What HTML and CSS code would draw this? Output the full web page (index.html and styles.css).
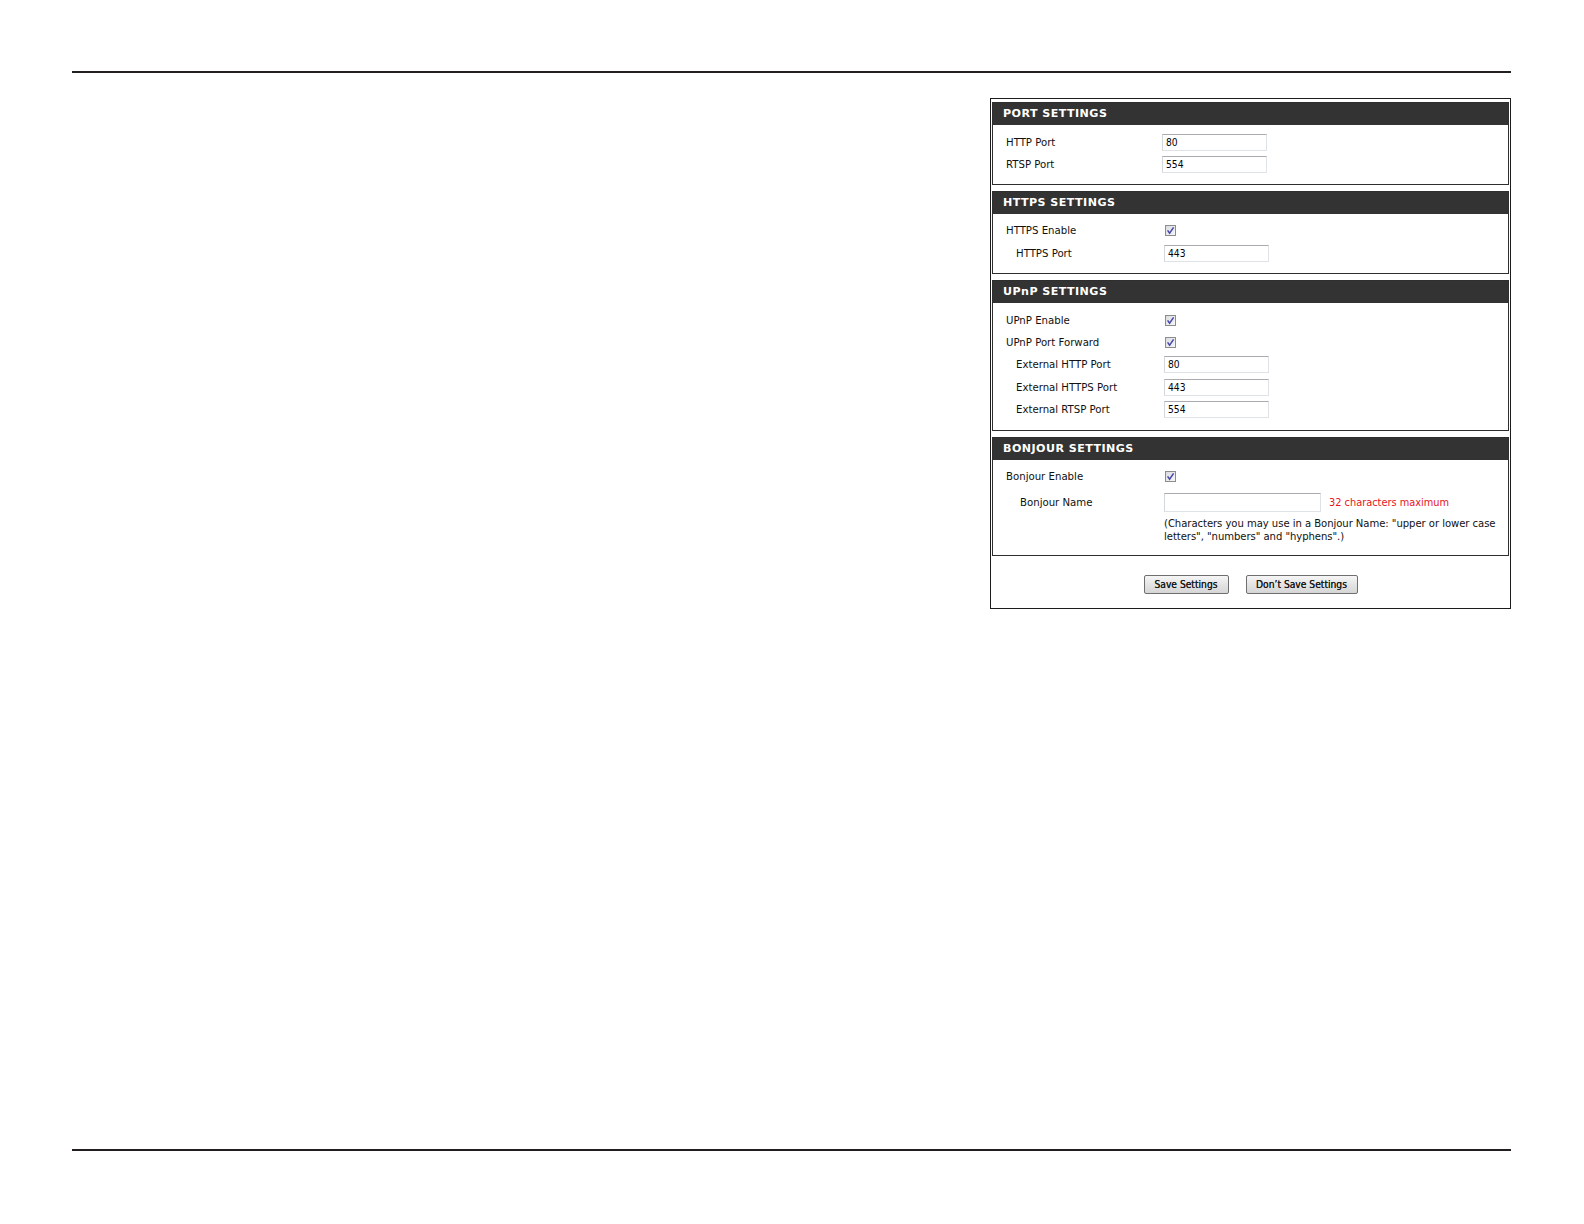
FILE: index.html
```html
<!DOCTYPE html>
<html>
<head>
<meta charset="utf-8">
<link rel="stylesheet" href="styles.css">
</head>
<body>
<div class="page">
  <div class="rule"></div>
  <div class="content">
    <div class="panel">
      <div class="section">
        <div class="section-head">PORT SETTINGS</div>
        <div class="section-body port">
          <div class="row"><span class="label w156">HTTP Port</span><span class="field">80</span></div>
          <div class="row"><span class="label w156">RTSP Port</span><span class="field">554</span></div>
        </div>
      </div>
      <div class="section">
        <div class="section-head">HTTPS SETTINGS</div>
        <div class="section-body https">
          <div class="row"><span class="label w159">HTTPS Enable</span><span class="check"><svg width="9" height="9" viewBox="0 0 9 9"><path d="M1.6 4.4 L3.6 7.2 L7.6 1.4" fill="none" stroke="#4646a8" stroke-width="1.5"/></svg></span></div>
          <div class="row tall24 indent"><span class="label w148">HTTPS Port</span><span class="field">443</span></div>
        </div>
      </div>
      <div class="section">
        <div class="section-head">UPnP SETTINGS</div>
        <div class="section-body upnp">
          <div class="row"><span class="label w159">UPnP Enable</span><span class="check"><svg width="9" height="9" viewBox="0 0 9 9"><path d="M1.6 4.4 L3.6 7.2 L7.6 1.4" fill="none" stroke="#4646a8" stroke-width="1.5"/></svg></span></div>
          <div class="row"><span class="label w159">UPnP Port Forward</span><span class="check"><svg width="9" height="9" viewBox="0 0 9 9"><path d="M1.6 4.4 L3.6 7.2 L7.6 1.4" fill="none" stroke="#4646a8" stroke-width="1.5"/></svg></span></div>
          <div class="row tall23 indent"><span class="label w148">External HTTP Port</span><span class="field">80</span></div>
          <div class="row indent"><span class="label w148">External HTTPS Port</span><span class="field">443</span></div>
          <div class="row tall23 indent"><span class="label w148">External RTSP Port</span><span class="field">554</span></div>
        </div>
      </div>
      <div class="section">
        <div class="section-head">BONJOUR SETTINGS</div>
        <div class="section-body bonjour">
          <div class="row"><span class="label w159">Bonjour Enable</span><span class="check"><svg width="9" height="9" viewBox="0 0 9 9"><path d="M1.6 4.4 L3.6 7.2 L7.6 1.4" fill="none" stroke="#4646a8" stroke-width="1.5"/></svg></span></div>
          <div class="row name-row indent2"><span class="label w144">Bonjour Name</span><span class="field name"></span><span class="hint">32 characters maximum</span></div>
          <div class="note">(Characters you may use in a Bonjour Name: "upper or lower case letters", "numbers" and "hyphens".)</div>
        </div>
      </div>
      <div class="buttons">
        <span class="btn save">Save Settings</span>
        <span class="btn dont">Don’t Save Settings</span>
      </div>
    </div>
  </div>
  <div class="rule bottom"></div>
</div>
</body>
</html>
```
FILE: styles.css
```css
html, body {
  margin: 0;
  padding: 0;
  background: #fff;
}
.page {
  height: 1224px;
  display: flex;
  flex-direction: column;
  font-family: "DejaVu Sans Condensed", "Liberation Sans", sans-serif;
  color: #111;
}
.rule {
  margin: 71px 0 0 72px;
  width: 1439px;
  height: 2px;
  background: #231f20;
}
.rule.bottom {
  margin-top: auto;
  margin-bottom: 73px;
}
.content {
  display: flex;
  justify-content: flex-end;
  padding-right: 73px;
  margin-top: 25px;
}
.panel {
  width: 517px;
  border: 1px solid #1c1c1c;
  padding: 3px 1px 0;
}
.section {
  border: 1px solid #2e2e2e;
  margin-bottom: 6px;
}
.section-head {
  background: #333333;
  color: #fff;
  height: 22px;
  line-height: 22px;
  padding-left: 10px;
  font-family: "DejaVu Sans", Verdana, sans-serif;
  font-weight: bold;
  font-size: 11.1px;
  letter-spacing: 0.45px;
}
.section-body {
  padding: 6px 0 9px;
}
.section-body.https {
  padding-top: 5px;
  padding-bottom: 8px;
}
.section-body.bonjour {
  padding-top: 5px;
  padding-bottom: 12px;
}
.row {
  display: flex;
  align-items: center;
  height: 22px;
  padding-left: 13px;
  font-size: 11.3px;
}
.row.tall23 {
  height: 23px;
}
.row.tall24 {
  height: 24px;
}
.row.indent {
  padding-left: 23px;
}
.row.indent2 {
  padding-left: 27px;
}
.row.name-row {
  height: 30px;
}
.label {
  flex: none;
}
.w156 { width: 156px; }
.w159 { width: 159px; }
.w148 { width: 148px; }
.w144 { width: 144px; }
.field {
  box-sizing: border-box;
  width: 105px;
  height: 17px;
  border: 1px solid #dfe3e8;
  border-top-color: #a9abb0;
  border-left-color: #d4d7dc;
  padding-left: 3px;
  font-size: 10.2px;
  line-height: 15px;
  color: #000;
}
.field.name {
  width: 157px;
  height: 19px;
}
.hint {
  margin-left: 8px;
  color: #e8131a;
  font-size: 10.9px;
}
.check {
  box-sizing: border-box;
  width: 11px;
  height: 11px;
  border: 1px solid #8c8c8c;
  background: linear-gradient(135deg, #dcdde2, #f6f6f8);
  display: flex;
  align-items: center;
  justify-content: center;
}
.check svg {
  display: block;
}
.note {
  margin-left: 171px;
  margin-right: 2px;
  font-size: 11.2px;
  line-height: 13px;
  letter-spacing: -0.05px;
  color: #111;
}
.buttons {
  display: flex;
  justify-content: center;
  gap: 17px;
  padding: 13px 0 14px;
}
.btn {
  box-sizing: border-box;
  height: 19px;
  border: 1px solid #6f6f6f;
  border-radius: 2px;
  background: linear-gradient(#f6f6f6, #e4e4e4 50%, #d6d6d6);
  font-size: 10.2px;
  line-height: 17px;
  text-align: center;
  color: #1a1a1a;
  text-shadow: 0 0 0.3px #1a1a1a;
}
.btn.save {
  width: 85px;
}
.btn.dont {
  width: 112px;
}
```
